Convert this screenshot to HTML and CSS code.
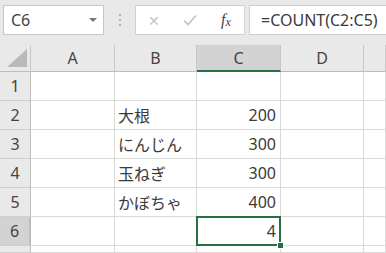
FILE: index.html
```html
<!DOCTYPE html>
<html lang="ja">
<head>
    <meta charset="UTF-8">
    <title>COUNT</title>
    <link rel="stylesheet" href="styles.css">
</head>
<body>

    <div class="toolbar">
        <div class="name-box">
            <span>C6</span>
            <span class="drop"></span>
        </div>
        <div class="grip"><i></i><i></i><i></i></div>
        <div class="fx-group">
            <span class="btn cancel">&#x2715;</span>
            <span class="btn enter">
                <svg width="14" height="12" viewBox="0 0 14 12"><path d="M1 6.5 L5 10.5 L13 1.5" fill="none" stroke="#c4c4c4" stroke-width="1.6"/></svg>
            </span>
            <span class="btn fx"><i>f</i><i class="x">x</i></span>
        </div>
        <div class="formula">=COUNT(C2:C5)</div>
    </div>

    <div class="sheet">
        <div class="hd corner"><span class="tri"></span></div>
        <div class="hd">A</div>
        <div class="hd">B</div>
        <div class="hd col-sel">C</div>
        <div class="hd">D</div>
        <div class="hd"></div>

        <div class="hd row">1</div>
        <div class="cell"></div><div class="cell"></div><div class="cell"></div><div class="cell"></div><div class="cell"></div>

        <div class="hd row">2</div>
        <div class="cell"></div><div class="cell">大根</div><div class="cell num">200</div><div class="cell"></div><div class="cell"></div>

        <div class="hd row">3</div>
        <div class="cell"></div><div class="cell">にんじん</div><div class="cell num">300</div><div class="cell"></div><div class="cell"></div>

        <div class="hd row">4</div>
        <div class="cell"></div><div class="cell">玉ねぎ</div><div class="cell num">300</div><div class="cell"></div><div class="cell"></div>

        <div class="hd row">5</div>
        <div class="cell"></div><div class="cell">かぼちゃ</div><div class="cell num">400</div><div class="cell"></div><div class="cell"></div>

        <div class="hd row row-sel">6</div>
        <div class="cell"></div><div class="cell"></div><div class="cell num active">4<span class="handle"></span></div><div class="cell"></div><div class="cell"></div>

        <div class="hd row"></div>
        <div class="cell"></div><div class="cell"></div><div class="cell"></div><div class="cell"></div><div class="cell"></div>
    </div>

</body>
</html>
```

FILE: styles.css
```css
body {
    margin: 0;
    width: 386px;
    height: 253px;
    overflow: hidden;
    background-color: #ffffff;
    font-family: "Noto Sans", "Noto Sans CJK JP", sans-serif;
    font-size: 16px;
    color: #3a3a3a;
}
.toolbar {
    display: flex;
    height: 45px;
    padding: 5px 0 0 3px;
    box-sizing: border-box;
    background-color: #e9e9e9;
}
.name-box {
    width: 101px;
    height: 30px;
    box-sizing: border-box;
    border: 1px solid #c6c6c6;
    background-color: white;
    display: flex;
    align-items: center;
    justify-content: space-between;
    padding: 0 6px 0 7px;
    color: #444;
}
.drop {
    width: 0;
    height: 0;
    border-left: 4px solid transparent;
    border-right: 4px solid transparent;
    border-top: 4px solid #777;
}
.grip {
    width: 31px;
    display: flex;
    flex-direction: column;
    align-items: center;
    justify-content: center;
    gap: 3px;
    height: 30px;
}
.grip i {
    width: 2px;
    height: 2px;
    background-color: #b5b5b5;
}
.fx-group {
    width: 110px;
    height: 30px;
    box-sizing: border-box;
    border: 1px solid #d0d0d0;
    background-color: white;
    display: flex;
    align-items: center;
}
.btn {
    width: 36px;
    text-align: center;
    display: flex;
    justify-content: center;
    align-items: center;
}
.cancel {
    color: #c4c4c4;
    font-size: 14px;
}
.fx {
    font-family: "Liberation Serif", serif;
    color: #444;
    font-size: 16px;
}
.fx .x {
    font-size: 12px;
    margin-top: 4px;
}
.formula {
    flex: 1;
    margin-left: 4px;
    height: 30px;
    box-sizing: border-box;
    border: 1px solid #d0d0d0;
    border-right: none;
    background-color: white;
    padding-left: 11px;
    display: flex;
    align-items: center;
    color: #3a3a3a;
}
.sheet {
    display: grid;
    grid-template-columns: 31px 84px 82px 84px 83px 1fr;
    grid-template-rows: 27px repeat(6, 29px) 7px;
}
.hd {
    background-color: #e9e9e9;
    border-right: 1px solid #c8c8c8;
    border-bottom: 1px solid #bdbdbd;
    display: flex;
    align-items: center;
    justify-content: center;
    color: #444;
}
.hd.row {
    border-bottom-color: #cfcfcf;
    border-right-color: #bdbdbd;
}
.corner {
    position: relative;
}
.tri {
    position: absolute;
    right: 3px;
    bottom: 4px;
    width: 0;
    height: 0;
    border-left: 20px solid transparent;
    border-bottom: 18px solid #b9b9b9;
}
.col-sel {
    background-color: #d3d3d3;
    border-bottom: 2px solid #217346;
}
.row-sel {
    background-color: #d3d3d3;
    border-right: 2px solid #217346;
}
.cell {
    border-right: 1px solid #d9d9d9;
    border-bottom: 1px solid #d9d9d9;
    display: flex;
    align-items: center;
    padding: 0 4px 0 3px;
    white-space: nowrap;
}
.num {
    justify-content: flex-end;
}
.active {
    position: relative;
}
.active::after {
    content: "";
    position: absolute;
    left: -1px;
    top: -1px;
    right: -1px;
    bottom: -1px;
    border: 2px solid #217346;
}
.handle {
    position: absolute;
    right: -4px;
    bottom: -4px;
    width: 5px;
    height: 5px;
    background-color: #217346;
    border: 1px solid white;
    z-index: 1;
}
```
